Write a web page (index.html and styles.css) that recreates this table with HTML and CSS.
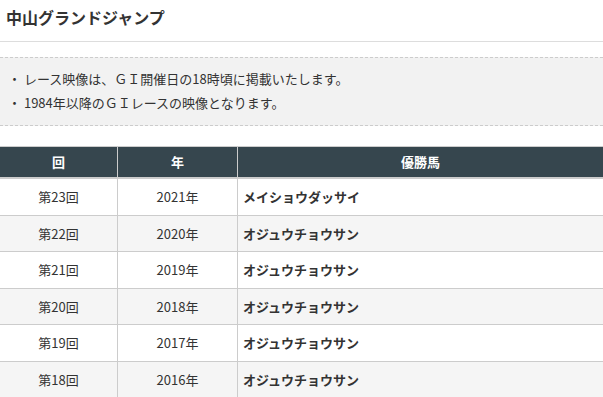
FILE: index.html
```html
<!DOCTYPE html>
<html lang="ja">
<head>
<meta charset="utf-8">
<link rel="stylesheet" href="styles.css">
</head>
<body>
<h1 class="title">中山グランドジャンプ</h1>
<div class="notes">
  <p>・ レース映像は、ＧＩ開催日の18時頃に掲載いたします。</p>
  <p>・ 1984年以降のＧＩレースの映像となります。</p>
</div>
<table class="results">
  <thead>
    <tr><th class="c1">回</th><th class="c2">年</th><th>優勝馬</th></tr>
  </thead>
  <tbody>
    <tr><td>第23回</td><td>2021年</td><td class="horse">メイショウダッサイ</td></tr>
    <tr><td>第22回</td><td>2020年</td><td class="horse">オジュウチョウサン</td></tr>
    <tr><td>第21回</td><td>2019年</td><td class="horse">オジュウチョウサン</td></tr>
    <tr><td>第20回</td><td>2018年</td><td class="horse">オジュウチョウサン</td></tr>
    <tr><td>第19回</td><td>2017年</td><td class="horse">オジュウチョウサン</td></tr>
    <tr><td>第18回</td><td>2016年</td><td class="horse">オジュウチョウサン</td></tr>
  </tbody>
</table>
</body>
</html>
```
FILE: styles.css
```css
html, body {
  margin: 0;
  padding: 0;
  background: #fff;
}
body {
  font-family: "Noto Sans CJK JP", "Noto Sans", sans-serif;
  color: #333;
  font-size: 13px;
}
.title {
  margin: 0;
  padding: 6px 6px 0;
  height: 35px;
  font-size: 16px;
  line-height: 22px;
  font-weight: bold;
  border-bottom: 1px solid #ddd;
}
.notes {
  margin-top: 15px;
  background: #f2f2f2;
  border-top: 1px dashed #ccc;
  border-bottom: 1px dashed #ccc;
  padding: 9px 8px 10px;
  height: 48px;
}
.notes p {
  margin: 0;
  line-height: 24px;
}
.results {
  margin-top: 20px;
  width: 603px;
  border-collapse: collapse;
  table-layout: fixed;
}
.results th {
  background: #36464e;
  color: #fff;
  font-weight: bold;
  height: 30px;
  padding: 0;
  border-top: 1px solid #ccc;
  border-bottom: 2px solid #ccc;
  border-left: 1px solid #ccc;
  line-height: 20px;
}
.results th:first-child, .results td:first-child {
  border-left: none;
}
.results .c1 { width: 117px; }
.results .c2 { width: 119px; }
.results td {
  text-align: center;
  padding: 8px 5px;
  line-height: 19.5px;
  border-left: 1px solid #ccc;
  border-bottom: 1px solid #ccc;
}
.results tbody tr:nth-child(even) td {
  background: #f5f5f5;
}
.results td.horse {
  text-align: left;
  font-weight: bold;
}
```
